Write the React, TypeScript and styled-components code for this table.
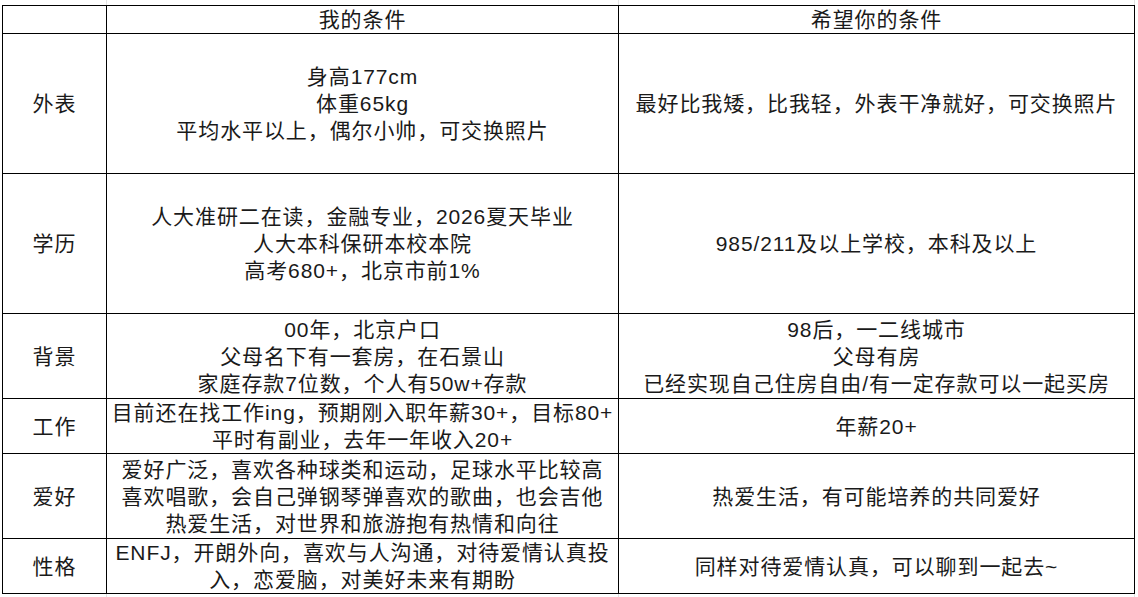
import React from 'react';
import styled, { createGlobalStyle } from 'styled-components';

interface Row {
  label: string;
  height: number;
  mine: string[];
  wanted: string[];
}

const rows: Row[] = [
  {
    label: '外表',
    height: 140,
    mine: ['身高177cm', '体重65kg', '平均水平以上，偶尔小帅，可交换照片'],
    wanted: ['最好比我矮，比我轻，外表干净就好，可交换照片'],
  },
  {
    label: '学历',
    height: 140,
    mine: ['人大准研二在读，金融专业，2026夏天毕业', '人大本科保研本校本院', '高考680+，北京市前1%'],
    wanted: ['985/211及以上学校，本科及以上'],
  },
  {
    label: '背景',
    height: 85,
    mine: ['00年，北京户口', '父母名下有一套房，在石景山', '家庭存款7位数，个人有50w+存款'],
    wanted: ['98后，一二线城市', '父母有房', '已经实现自己住房自由/有一定存款可以一起买房'],
  },
  {
    label: '工作',
    height: 55,
    mine: ['目前还在找工作ing，预期刚入职年薪30+，目标80+', '平时有副业，去年一年收入20+'],
    wanted: ['年薪20+'],
  },
  {
    label: '爱好',
    height: 85,
    mine: ['爱好广泛，喜欢各种球类和运动，足球水平比较高', '喜欢唱歌，会自己弹钢琴弹喜欢的歌曲，也会吉他', '热爱生活，对世界和旅游抱有热情和向往'],
    wanted: ['热爱生活，有可能培养的共同爱好'],
  },
  {
    label: '性格',
    height: 55,
    mine: ['ENFJ，开朗外向，喜欢与人沟通，对待爱情认真投', '入，恋爱脑，对美好未来有期盼'],
    wanted: ['同样对待爱情认真，可以聊到一起去~'],
  },
];

const COLUMNS = '104px 512px 516px';

const GlobalStyle = createGlobalStyle`
  html, body {
    margin: 0;
    padding: 0;
    background: #ffffff;
  }
  *, *::before, *::after {
    box-sizing: border-box;
  }
`;

const Page = styled.div`
  padding-left: 2px;
  font-family: 'Liberation Sans', 'Noto Sans CJK SC', sans-serif;
  font-size: 21px;
  letter-spacing: 0.9px;
  color: #1a1a1a;
`;

// faint spreadsheet gridlines that continue above and below the bordered table
const Edge = styled.div<{ $h: number }>`
  display: grid;
  grid-template-columns: ${COLUMNS};
  height: ${(p) => p.$h}px;
  padding-left: 1px;
  width: fit-content;
`;

const EdgeCell = styled.div`
  border-right: 1px solid #e2e2e2;
`;

const Sheet = styled.div<{ $rows: string }>`
  display: grid;
  grid-template-columns: ${COLUMNS};
  grid-template-rows: ${(p) => p.$rows};
  border-top: 1px solid #000;
  border-left: 1px solid #000;
  width: fit-content;
`;

const Cell = styled.div`
  display: flex;
  flex-direction: column;
  align-items: center;
  justify-content: center;
  border-right: 1px solid #000;
  border-bottom: 1px solid #000;
  white-space: nowrap;
  overflow: hidden;
  text-align: center;
`;

const Line = styled.div`
  height: 27px;
  line-height: 27px;
`;

const Lines: React.FC<{ lines: string[] }> = ({ lines }) => (
  <>
    {lines.map((l, i) => (
      <Line key={i}>{l}</Line>
    ))}
  </>
);

export default function App() {
  const template = ['28px', ...rows.map((r) => `${r.height}px`)].join(' ');
  return (
    <>
      <GlobalStyle />
      <Page>
        <Edge $h={5}>
          <EdgeCell />
          <EdgeCell />
          <EdgeCell />
        </Edge>
        <Sheet $rows={template}>
          <Cell />
          <Cell>
            <Line>我的条件</Line>
          </Cell>
          <Cell>
            <Line>希望你的条件</Line>
          </Cell>
          {rows.map((r) => (
            <React.Fragment key={r.label}>
              <Cell>
                <Line>{r.label}</Line>
              </Cell>
              <Cell>
                <Lines lines={r.mine} />
              </Cell>
              <Cell>
                <Lines lines={r.wanted} />
              </Cell>
            </React.Fragment>
          ))}
        </Sheet>
        <Edge $h={4}>
          <EdgeCell />
          <EdgeCell />
          <EdgeCell />
        </Edge>
      </Page>
    </>
  );
}
